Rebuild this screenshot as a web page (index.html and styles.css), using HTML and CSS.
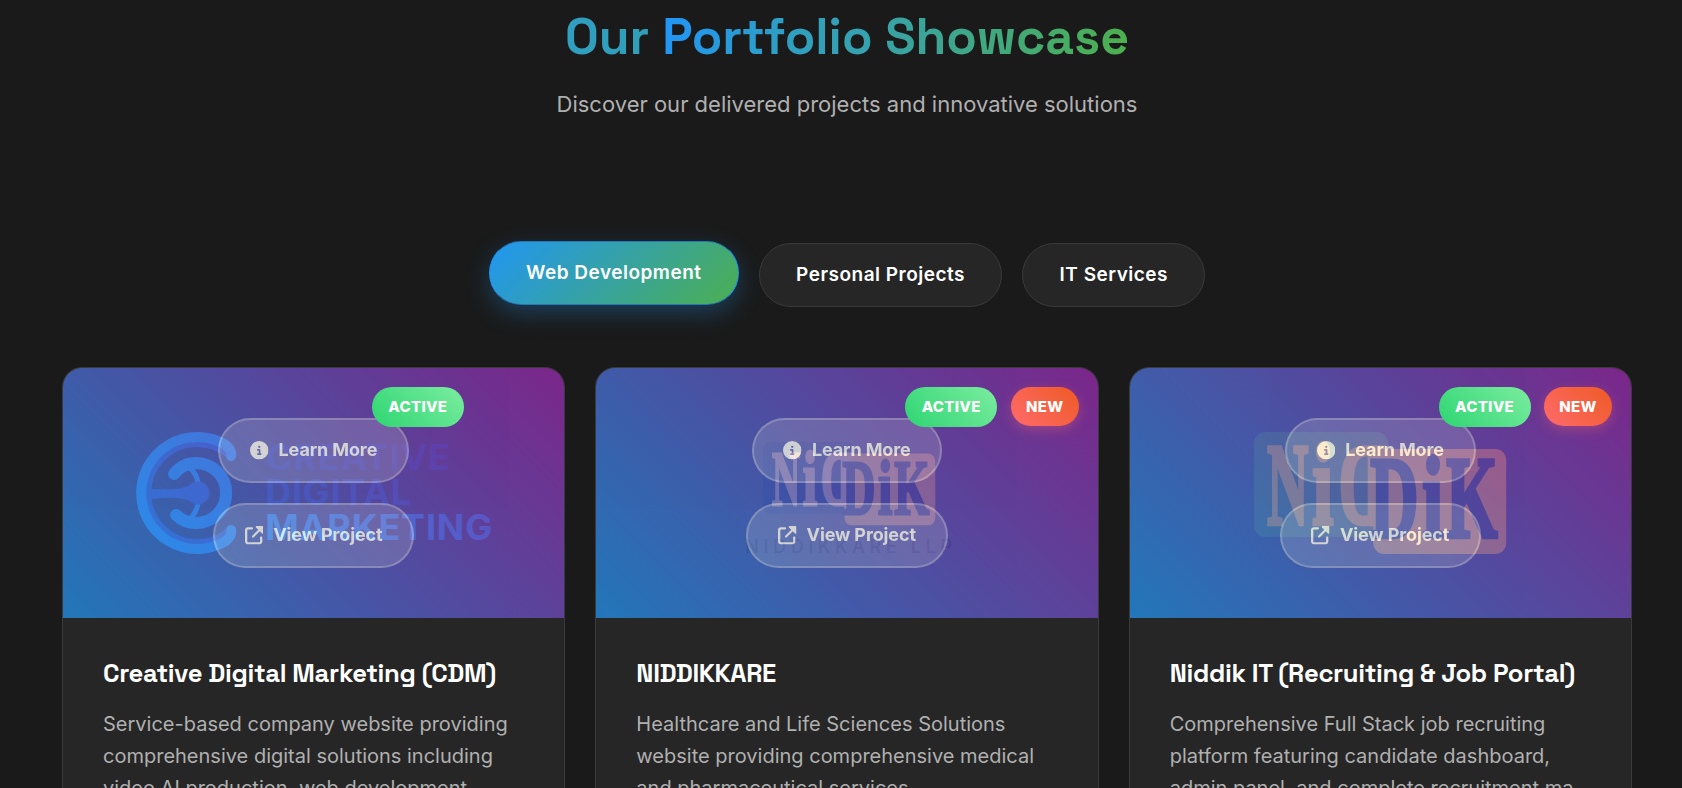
FILE: index.html
```html
<!DOCTYPE html>
<html lang="en">
<head>
<meta charset="utf-8">
<title>Portfolio Showcase</title>
<link rel="stylesheet" href="styles.css">
</head>
<body>
<svg class="defs" width="0" height="0">
  <symbol id="info" viewBox="0 0 512 512"><path d="M256 512A256 256 0 1 0 256 0a256 256 0 1 0 0 512zM216 336h24V272H216c-13.300 0-24-10.700-24-24s10.700-24 24-24h48c13.300 0 24 10.700 24 24v88h8c13.300 0 24 10.700 24 24s-10.700 24-24 24H216c-13.300 0-24-10.700-24-24s10.700-24 24-24zm40-208a32 32 0 1 1 0 64 32 32 0 1 1 0-64z"/></symbol>
  <symbol id="ext" viewBox="0 0 512 512"><path d="M320 0c-22 0-32 26-17 41l168 168c15 15 41 5 41-17V32c0-17.700-14.300-32-32-32z"/><path d="M222 290L430 82" stroke="#fff" stroke-width="60" stroke-linecap="round"/><path d="M80 32C35.800 32 0 67.800 0 112V432c0 44.200 35.800 80 80 80H400c44.200 0 80-35.800 80-80V320c0-17.700-14.300-32-32-32s-32 14.300-32 32V432c0 8.800-7.200 16-16 16H80c-8.800 0-16-7.200-16-16V112c0-8.800 7.200-16 16-16H192c17.700 0 32-14.300 32-32s-14.300-32-32-32H80z"/></symbol>
  <linearGradient id="ink" x1="0" x2="1"><stop offset="0" stop-color="#10a2e4"/><stop offset="1" stop-color="#1078c4"/></linearGradient>
</svg>
<main class="page">
  <header class="head">
    <h1 class="title"><span class="t1">Our</span> <span class="t2">Portfolio</span> <span class="t3">Showcase</span></h1>
    <p class="lead">Discover our delivered projects and innovative solutions</p>
  </header>
  <nav class="tabs">
    <button class="tab active">Web Development</button>
    <button class="tab">Personal Projects</button>
    <button class="tab">IT Services</button>
  </nav>
  <section class="grid">
    <article class="card">
      <div class="media">
        <svg class="logo" viewBox="0 0 501 250">
          <path fill="none" stroke="#1f56b0" stroke-width="6" d="M165 87A49 49 0 1 0 165 163"/>
          <g fill="none" stroke="#08a4ee" stroke-linecap="round">
            <path stroke-width="10" d="M168 88Q169 82 162 76.500A56 56 0 1 0 162 173.500Q169 168 168 162"/>
            <path stroke-width="12" d="M111 106C118 97 126 95 133 95A30 30 0 0 1 133 155C126 155 119 153 113 147"/>
            <path stroke-width="5" stroke-linecap="butt" d="M126 99Q134 106 135 116M135 134Q134 144 126 152"/>
          </g>
          <path fill="#1f56b0" d="M88 121C108 122 117 121 126 117.500A11.500 11.500 0 1 1 126 132.500C117 129 108 129 88 131z"/>
          <g class="wordmark" font-size="36">
            <text x="203" y="102" textLength="184" fill="#1c3470">CREATIVE</text>
            <text x="202" y="137" textLength="146" fill="#1a4084">DIGITAL</text>
            <text x="202" y="172" textLength="227" fill="url(#ink)">MARKETING</text>
          </g>
        </svg>
        <div class="overlay">
          <a class="action"><svg class="icon"><use href="#info"/></svg><span class="label">Learn More</span></a>
          <a class="action"><svg class="icon"><use href="#ext"/></svg><span class="label">View Project</span></a>
        </div>
        <span class="badge live">ACTIVE</span>
      </div>
      <div class="body">
        <h2 class="name">Creative Digital Marketing (CDM)</h2>
        <p class="text">Service-based company website providing<br>comprehensive digital solutions including<br>video AI production, web development,</p>
      </div>
    </article>
    <article class="card">
      <div class="media">
        <svg class="logo" viewBox="0 0 501 250">
          <g class="slab" transform="translate(167 74) scale(.683)">
            <rect width="134" height="105" rx="11" fill="#081c28"/>
            <rect x="119" y="17" width="133" height="105" rx="11" fill="#c8801c"/>
            <g fill="#b9884c" stroke="#b9884c">
              <text transform="translate(13 92) scale(.86 1.75)">N</text>
              <text transform="translate(58 92) scale(1.150 1.750)">i</text>
              <text transform="translate(131 92) scale(-.98 1.750)">D</text>
            </g>
            <g fill="#081420" stroke="#081420">
              <text transform="translate(116 105) scale(1.010 1.750)">D</text>
              <text transform="translate(168 105) scale(1.150 1.750)">i</text>
              <text transform="translate(192 105) scale(1 1.750)">K</text>
            </g>
          </g>
          <text class="caption" x="149" y="185" font-size="18" textLength="207" fill="#000">NIDDIKKARE LLP</text>
        </svg>
        <div class="overlay">
          <a class="action"><svg class="icon"><use href="#info"/></svg><span class="label">Learn More</span></a>
          <a class="action"><svg class="icon"><use href="#ext"/></svg><span class="label">View Project</span></a>
        </div>
        <span class="badge live">ACTIVE</span>
        <span class="badge new">NEW</span>
      </div>
      <div class="body">
        <h2 class="name">NIDDIKKARE</h2>
        <p class="text">Healthcare and Life Sciences Solutions<br>website providing comprehensive medical<br>and pharmaceutical services.</p>
      </div>
    </article>
    <article class="card">
      <div class="media">
        <svg class="logo" viewBox="0 0 501 250">
          <g class="slab" transform="translate(124 64)">
            <rect width="134" height="105" rx="11" fill="#30601c"/>
            <rect x="119" y="17" width="133" height="105" rx="11" fill="#ea9000"/>
            <g fill="#eaa000" stroke="#eaa000">
              <text transform="translate(13 92) scale(.86 1.75)">N</text>
              <text transform="translate(58 92) scale(1.150 1.750)">i</text>
              <text transform="translate(131 92) scale(-.98 1.750)">D</text>
            </g>
            <g fill="#0c2424" stroke="#0c2424">
              <text transform="translate(116 105) scale(1.010 1.750)">D</text>
              <text transform="translate(168 105) scale(1.150 1.750)">i</text>
              <text transform="translate(192 105) scale(1 1.750)">K</text>
            </g>
          </g>
        </svg>
        <div class="overlay">
          <a class="action"><svg class="icon"><use href="#info"/></svg><span class="label">Learn More</span></a>
          <a class="action"><svg class="icon"><use href="#ext"/></svg><span class="label">View Project</span></a>
        </div>
        <span class="badge live">ACTIVE</span>
        <span class="badge new">NEW</span>
      </div>
      <div class="body">
        <h2 class="name">Niddik IT (Recruiting &amp; Job Portal)</h2>
        <p class="text">Comprehensive Full Stack job recruiting<br>platform featuring candidate dashboard,<br>admin panel, and complete recruitment ma</p>
      </div>
    </article>
  </section>
</main>
</body>
</html>
```

FILE: styles.css
```css
* { box-sizing: border-box; }
body {
  margin: 0;
  height: 788px;
  overflow: hidden;
  background: #1a1a1a;
  color: #fff;
  font-family: Inter, "Liberation Sans", sans-serif;
}
.defs { position: absolute; }
.page { height: 788px; overflow: hidden; padding: 5px 50px 0 62px; }
.head { display: flex; flex-direction: column; align-items: center; }
.title {
  margin: 0;
  font-family: "Space Grotesk", Inter, sans-serif;
  font-size: 50px;
  line-height: 64px;
  font-weight: 700;
}
.t1, .t2, .t3 { -webkit-background-clip: text; background-clip: text; color: transparent; }
.t1 { background-image: linear-gradient(90deg, #309fc0, #309fb8); }
.t2 { background-image: linear-gradient(100deg, #2196f3 5%, #2f9fc0 60%, #37a2ac); }
.t3 { background-image: linear-gradient(100deg, #37a2a8, #4caf50 95%); }
.lead { margin: 18px 0 0; font-size: 22px; line-height: 35px; color: #b0b0b0; }
.tabs { display: flex; gap: 20px; justify-content: center; margin-top: 121px; }
.tab {
  height: 64px;
  padding: 0 36.3px 1px;
  border: 1px solid #3a3a3a;
  border-radius: 32px;
  background: #262626;
  color: #fff;
  font: 600 19px Inter, sans-serif;
  letter-spacing: 0.5px;
}
.tab.active {
  border-color: #2196f3;
  border-top-color: #2278b8;
  border-bottom-color: #2278b8;
  background: linear-gradient(135deg, #2196f3, #4caf50);
  box-shadow: 0 8px 25px rgba(33, 150, 243, 0.3);
  transform: translateY(-2px);
}
.grid {
  display: grid;
  grid-template-columns: repeat(3, 1fr);
  gap: 30px;
  margin-top: 60px;
}
.card {
  height: 520px;
  overflow: hidden;
  border: 1px solid #3a3a3a;
  border-radius: 20px;
  background: #262626;
}
.media { position: relative; height: 250px; }
.logo { display: block; width: 100%; height: 250px; }
.wordmark { font-family: Inter, sans-serif; font-weight: 700; }
.caption { font-family: Inter, sans-serif; font-weight: 500; }
.slab { font-family: "Liberation Serif", serif; font-size: 66px; font-weight: 700; stroke-width: 2.5; }
.slab rect { stroke: none; }
.overlay {
  position: absolute;
  inset: 0;
  display: flex;
  flex-direction: column;
  align-items: center;
  justify-content: center;
  gap: 20px;
  opacity: 0.8;
  background: linear-gradient(45deg, rgba(33, 150, 243, 0.9), rgba(156, 39, 176, 0.9));
}
.action {
  display: flex;
  align-items: center;
  gap: 10px;
  height: 65px;
  padding: 0 29.8px;
  border: 2px solid rgba(255, 255, 255, 0.3);
  border-radius: 33px;
  background: rgba(255, 255, 255, 0.2);
  font-size: 18px;
  font-weight: 700;
  letter-spacing: -0.12px;
}
.label { padding-bottom: 2px; }
.icon { width: 18.5px; height: 18.5px; fill: #fff; }
.badge {
  position: absolute;
  top: 19px;
  border-radius: 20px;
  text-align: center;
  font-size: 15px;
  font-weight: 800;
  letter-spacing: 0.3px;
}
.live { right: 100.5px; width: 92px; height: 40px; line-height: 40px; background: linear-gradient(45deg, #2ed573, #7bed9f); }
.new {
  right: 19px;
  width: 68px;
  height: 39px;
  line-height: 39px;
  background: linear-gradient(45deg, #ff6b6b, #ee5a24);
  box-shadow: 0 4px 12px rgba(255, 107, 107, 0.3);
}
.body { padding: 37px 40px; }
.name {
  margin: 0;
  font-family: "Space Grotesk", Inter, sans-serif;
  font-size: 25.6px;
  line-height: 36px;
  font-weight: 700;
  letter-spacing: -0.33px;
  white-space: nowrap;
}
.text { margin: 17px 0 0; font-size: 20px; line-height: 32px; color: #b0b0b0; white-space: nowrap; }
```
